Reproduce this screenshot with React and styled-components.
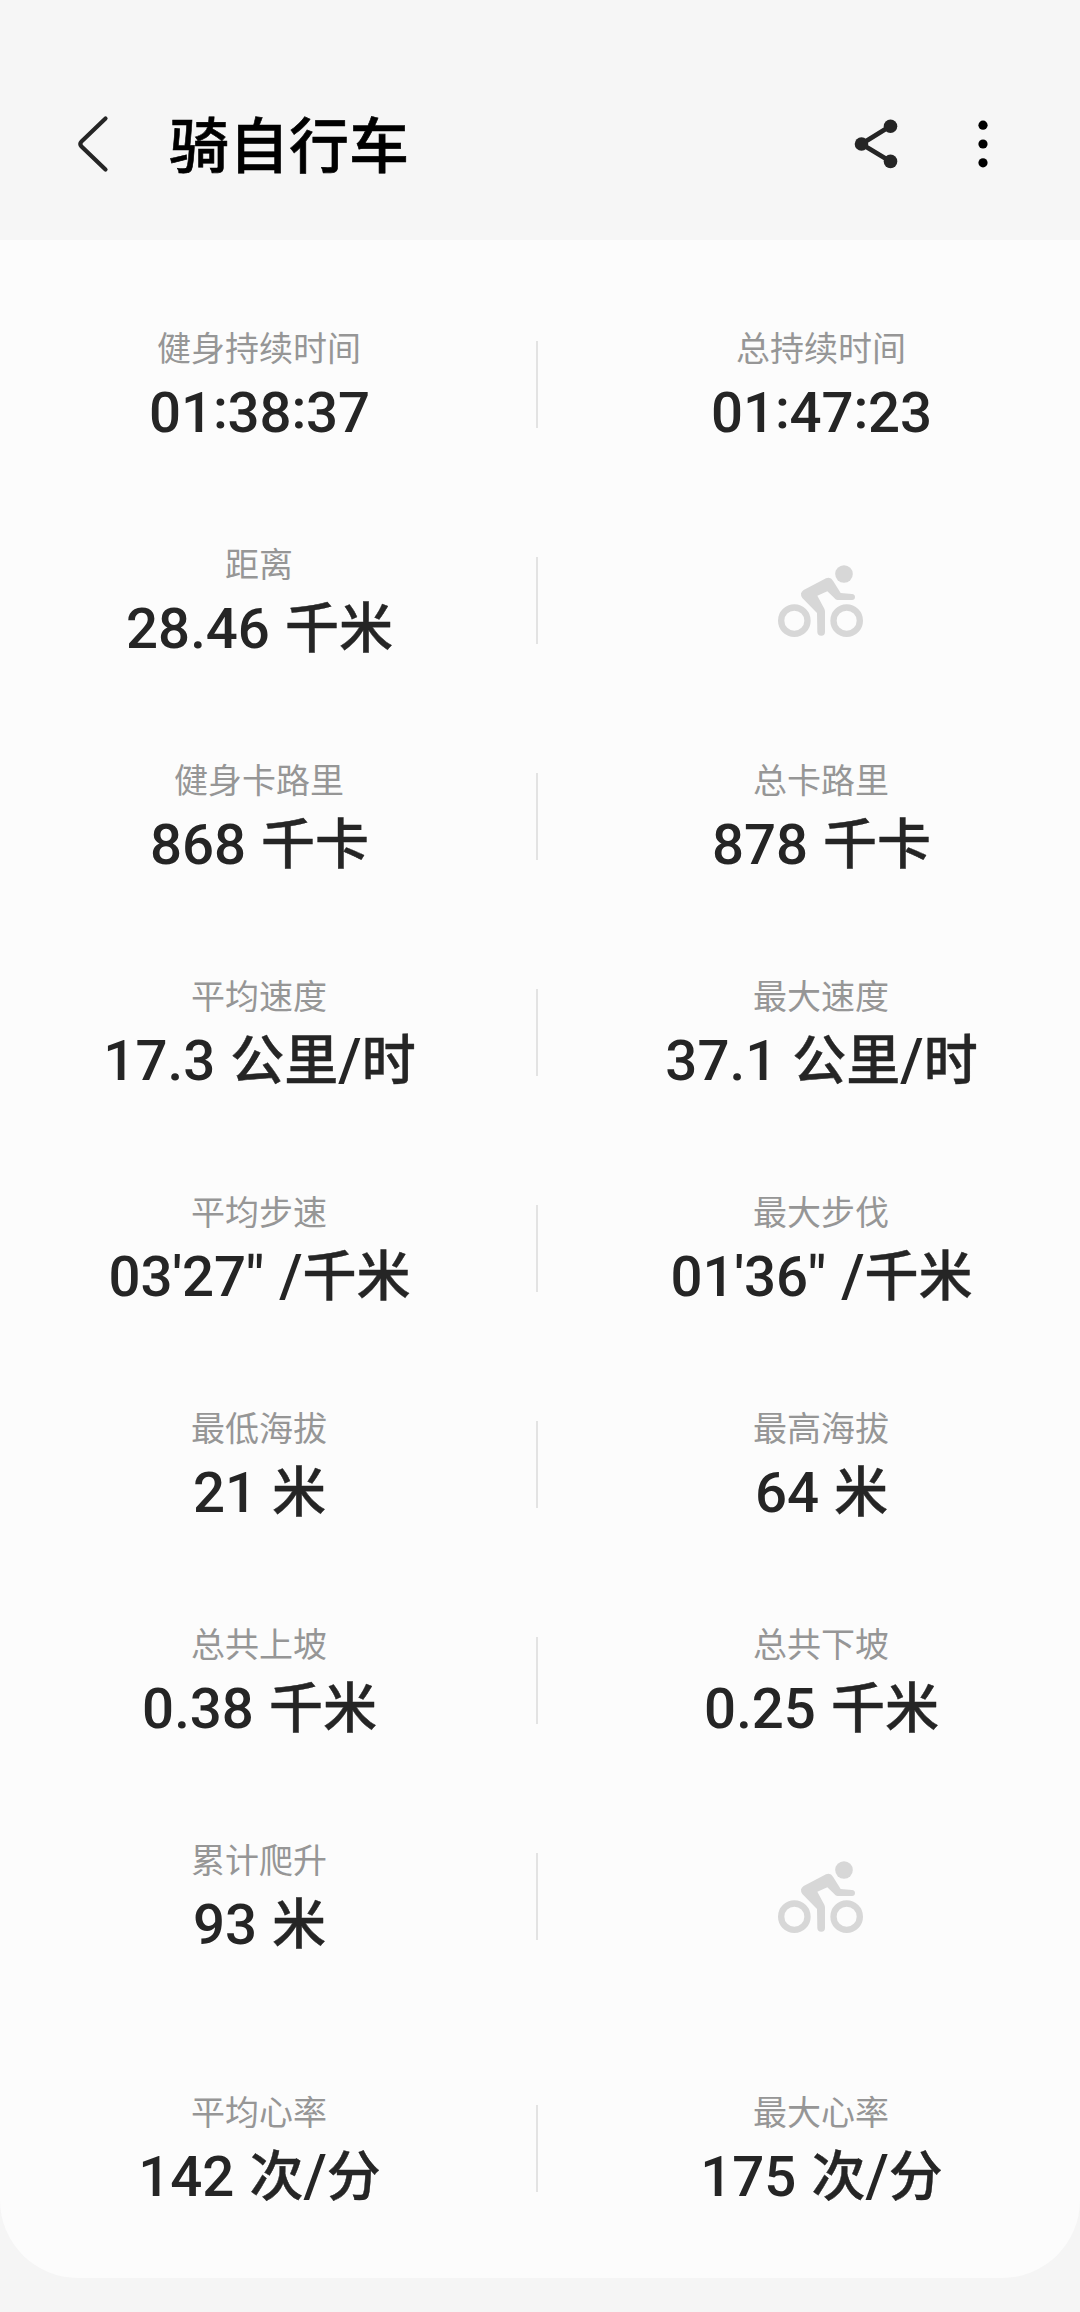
import React from "react";
import styled, { createGlobalStyle } from "styled-components";

const rows = [
  [
    { label: "健身持续时间", value: "01:38:37" },
    { label: "总持续时间", value: "01:47:23" },
  ],
  [{ label: "距离", value: "28.46 千米" }, null],
  [
    { label: "健身卡路里", value: "868 千卡" },
    { label: "总卡路里", value: "878 千卡" },
  ],
  [
    { label: "平均速度", value: "17.3 公里/时" },
    { label: "最大速度", value: "37.1 公里/时" },
  ],
  [
    { label: "平均步速", value: "03'27\" /千米" },
    { label: "最大步伐", value: "01'36\" /千米" },
  ],
  [
    { label: "最低海拔", value: "21 米" },
    { label: "最高海拔", value: "64 米" },
  ],
  [
    { label: "总共上坡", value: "0.38 千米" },
    { label: "总共下坡", value: "0.25 千米" },
  ],
  [{ label: "累计爬升", value: "93 米" }, null],
  [
    { label: "平均心率", value: "142 次/分" },
    { label: "最大心率", value: "175 次/分" },
  ],
];

// Units, slashes and colons each get their own size next to the digits
function splitValue(value) {
  return value
    .split(/([\u4e00-\u9fff]+|\/|:)/)
    .filter(Boolean)
    .map((part, i) => {
      if (part === ":") return <Colon key={i}>:</Colon>;
      if (part === "/") return <Slash key={i}>/</Slash>;
      return /[\u4e00-\u9fff]/.test(part) ? <Unit key={i}>{part}</Unit> : part;
    });
}

function Cyclist() {
  return (
    <CyclistIcon viewBox="111 99 264 225">
      <circle cx="163" cy="272" r="39.5" fill="none" stroke="#d7d7d7" strokeWidth="19" />
      <circle cx="320" cy="272" r="39.5" fill="none" stroke="#d7d7d7" strokeWidth="19" />
      <circle cx="312" cy="132" r="26.5" fill="#d7d7d7" />
      <path
        fill="#d7d7d7"
        d="M191 180 L258 145 Q272 140 279 152 L302 189 L336 192 Q345 193 345 201 Q345 210 336 210 L293 210 Q287 210 283 204 L262 184 L232 197 L253 236 Q255 240 255 245 L255 306 Q255 317 244 317 Q232 317 232 306 L231 249 L187 204 Q177 189 191 180 Z"
      />
    </CyclistIcon>
  );
}

function Stat({ item }) {
  if (!item) {
    return (
      <IconCell>
        <Cyclist />
      </IconCell>
    );
  }
  return (
    <Cell>
      <Label>{item.label}</Label>
      <Value>{splitValue(item.value)}</Value>
    </Cell>
  );
}

function App() {
  return (
    <Page>
      <GlobalStyle />
      <Header>
        <BackIcon viewBox="0 0 36 60">
          <path d="M29.5 4.5 L5.5 27.5 Q3 30 5.5 32.5 L29.5 55.5" />
        </BackIcon>
        <Title>骑自行车</Title>
        <ShareIcon viewBox="0 0 44 50">
          <path d="M36.5 7 L7.5 25 L36.5 42.5" fill="none" stroke="#252525" strokeWidth="4.8" />
          <circle cx="36.5" cy="7.2" r="6.8" />
          <circle cx="7.5" cy="25" r="6.8" />
          <circle cx="36.5" cy="42.4" r="6.8" />
        </ShareIcon>
        <MoreIcon viewBox="0 0 10 50">
          <circle cx="5" cy="6.2" r="4.6" />
          <circle cx="5" cy="25" r="4.6" />
          <circle cx="5" cy="43.8" r="4.6" />
        </MoreIcon>
      </Header>
      <Card>
        {rows.map(([left, right], i) => (
          <Row key={i} $spaced={i === rows.length - 1}>
            <Stat item={left} />
            <Divider />
            <Stat item={right} />
          </Row>
        ))}
      </Card>
    </Page>
  );
}

const GlobalStyle = createGlobalStyle`
  body {
    margin: 0;
    background: #f5f5f5;
  }
`;

const Page = styled.div`
  box-sizing: border-box;
  width: 1080px;
  height: 2312px;
  background: #f5f5f5;
  font-family: Roboto, "Noto Sans CJK SC", sans-serif;
`;

const Header = styled.header`
  box-sizing: border-box;
  display: flex;
  align-items: center;
  height: 240px;
  padding: 48px 92px 0 76px;
  background: #f6f6f6;
`;

const BackIcon = styled.svg`
  width: 36px;
  height: 60px;
  fill: none;
  stroke: #252525;
  stroke-width: 4.2;
  stroke-linecap: round;
`;

const Title = styled.h1`
  flex: 1;
  margin: 0 0 0 57px;
  padding-top: 7px;
  font-size: 60px;
  line-height: 88px;
  font-weight: 500;
  color: #000;
  -webkit-text-stroke: 0.6px #000;
`;

const ShareIcon = styled.svg`
  width: 44px;
  height: 50px;
  margin-right: 80px;
  fill: #252525;
`;

const MoreIcon = styled.svg`
  width: 10px;
  height: 50px;
  fill: #000;
`;

const Card = styled.main`
  box-sizing: border-box;
  height: 2038px;
  padding-top: 36px;
  background: #fcfcfc;
  border-radius: 0 0 78px 78px;
`;

const Row = styled.section`
  display: grid;
  grid-template-columns: 518px 44px 518px;
  align-items: center;
  height: 216px;
  margin-top: ${(props) => (props.$spaced ? "36px" : "0")};
`;

const Cell = styled.div`
  display: flex;
  flex-direction: column;
  align-items: center;
  gap: 6px;
  padding-top: 1px;
`;

const IconCell = styled(Cell)`
  padding-top: 0;
`;

const Label = styled.div`
  font-size: 34px;
  line-height: 50px;
  font-weight: 400;
  color: #969696;
`;

const Value = styled.div`
  height: 66px;
  padding-left: 1px;
  font-size: 56.4px;
  line-height: 66px;
  font-weight: 500;
  white-space: pre;
  word-spacing: 1px;
  color: #252525;
`;

const Unit = styled.span`
  font-size: 54px;
  line-height: 1;
  -webkit-text-stroke: 0.4px #252525;
`;

const Slash = styled.span`
  font-size: 60px;
  line-height: 1;
`;

const Colon = styled.span`
  line-height: 1;
  letter-spacing: -0.5px;
  vertical-align: 4.5px;
`;

const Divider = styled.div`
  width: 2px;
  height: 87px;
  margin-left: 18px;
  background: #e3e3e3;
`;

const CyclistIcon = styled.svg`
  width: 88px;
  height: 75px;
`;

export default App;
